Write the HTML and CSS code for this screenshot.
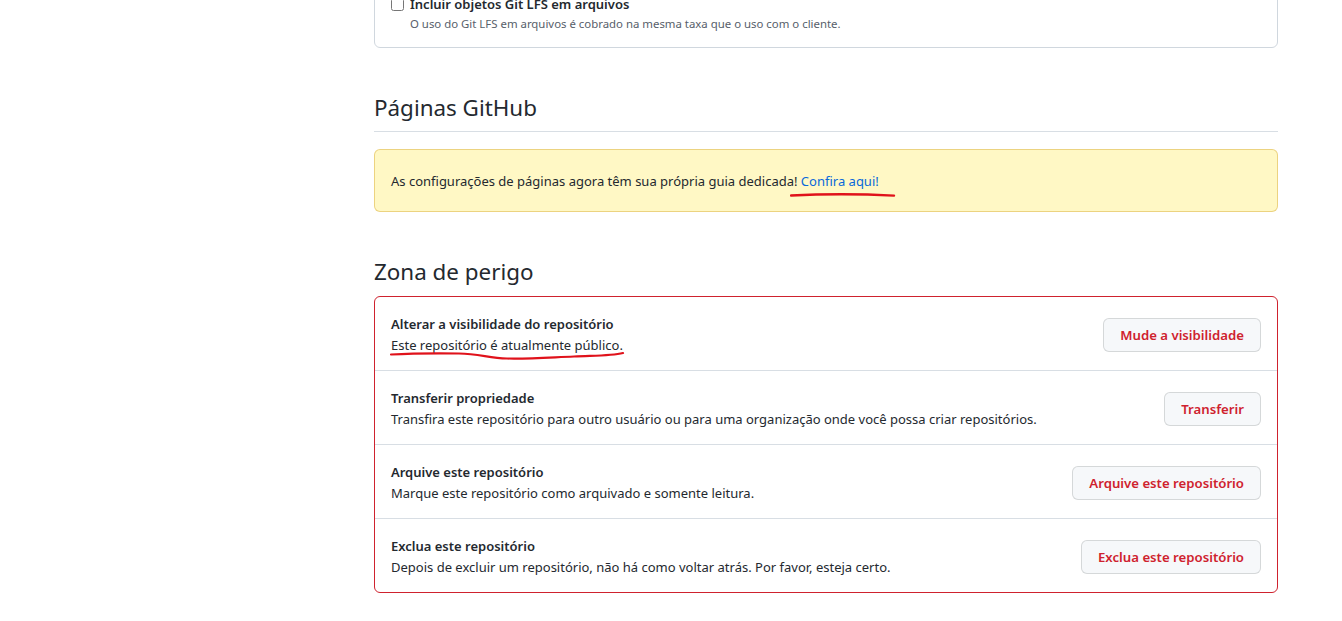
FILE: index.html
```html
<!DOCTYPE html>
<html lang="pt-BR">
<head>
<meta charset="utf-8">
<title>Configurações</title>
<link rel="stylesheet" href="styles.css">
</head>
<body>
<main class="content">
  <div class="box box-top">
    <label class="check-label"><input type="checkbox" class="check"> Incluir objetos Git LFS em arquivos</label>
    <p class="note">O uso do Git LFS em arquivos é cobrado na mesma taxa que o uso com o cliente.</p>
  </div>

  <h2 class="subhead subhead-line">Páginas GitHub</h2>
  <div class="flash">
    As configurações de páginas agora têm sua própria guia dedicada! <span class="annot-wrap"><a class="link" href="#">Confira aqui!</a><svg class="scribble scribble-link" width="106" height="8" viewBox="0 0 106 8"><path d="M1 4.5 C 30 3, 70 2.8, 104 4.6" stroke="#e0121b" stroke-width="2.4" fill="none" stroke-linecap="round"/></svg></span>
  </div>

  <h2 class="subhead subhead-danger">Zona de perigo</h2>
  <div class="danger">
    <div class="row">
      <div class="row-text">
        <strong class="row-title">Alterar a visibilidade do repositório</strong>
        <p class="row-desc"><span class="annot-wrap">Este repositório é atualmente público.<svg class="scribble scribble-desc" width="240" height="14" viewBox="0 0 240 14"><path d="M2 5.5 C 20 4.5, 45 4.2, 70 4.5 C 90 4.8, 100 9, 118 9.5 C 140 10, 160 8.5, 185 7.5 C 205 6.5, 222 7, 234 4" stroke="#e0121b" stroke-width="2.2" fill="none" stroke-linecap="round"/></svg></span></p>
      </div>
      <button class="btn">Mude a visibilidade</button>
    </div>
    <div class="row">
      <div class="row-text">
        <strong class="row-title">Transferir propriedade</strong>
        <p class="row-desc">Transfira este repositório para outro usuário ou para uma organização onde você possa criar repositórios.</p>
      </div>
      <button class="btn">Transferir</button>
    </div>
    <div class="row">
      <div class="row-text">
        <strong class="row-title">Arquive este repositório</strong>
        <p class="row-desc">Marque este repositório como arquivado e somente leitura.</p>
      </div>
      <button class="btn">Arquive este repositório</button>
    </div>
    <div class="row">
      <div class="row-text">
        <strong class="row-title">Exclua este repositório</strong>
        <p class="row-desc">Depois de excluir um repositório, não há como voltar atrás. Por favor, esteja certo.</p>
      </div>
      <button class="btn">Exclua este repositório</button>
    </div>
  </div>
</main>
</body>
</html>
```

FILE: styles.css
```css
* { box-sizing: border-box; }

html, body {
  margin: 0;
  padding: 0;
  background: #ffffff;
  overflow: hidden;
}

body {
  font-family: "Noto Sans", "Open Sans", "Liberation Sans", sans-serif;
  font-size: 13px;
  line-height: 21px;
  color: #24292f;
}

.content {
  width: 904px;
  margin-left: 374px;
}

.box {
  border: 1px solid #d0d7de;
  border-radius: 6px;
}

.box-top {
  margin-top: -23px;
  padding: 16px 16px 14px 16px;
}

.check-label {
  display: flex;
  align-items: center;
  gap: 6px;
  font-weight: 600;
  line-height: 21px;
}

.check {
  margin: 0;
  width: 13px;
  height: 13px;
}

.note {
  margin: 0;
  padding-left: 19px;
  font-size: 11.4px;
  line-height: 18px;
  color: #57606a;
}

.subhead {
  margin: 0;
  font-size: 22.4px;
  line-height: 30px;
  font-weight: 400;
  color: #24292f;
}

.subhead-line {
  margin-top: 45px;
  padding-bottom: 8px;
  border-bottom: 1px solid #d8dee4;
}

.flash {
  margin-top: 17px;
  padding: 21px 16px 19px 16px;
  background: #fff8c5;
  border: 1px solid rgba(212, 167, 44, 0.45);
  border-radius: 6px;
  line-height: 21px;
}

.link {
  color: #0969da;
  text-decoration: none;
}

.annot-wrap {
  position: relative;
  display: inline-block;
}

.scribble {
  position: absolute;
  pointer-events: none;
}

.scribble-link {
  left: -11px;
  top: 20px;
}

.scribble-desc {
  left: -2px;
  top: 14px;
}

.subhead-danger {
  margin-top: 45px;
  padding-bottom: 9px;
}

.danger {
  border: 1px solid #cf222e;
  border-radius: 6px;
}

.row {
  display: flex;
  align-items: center;
  justify-content: space-between;
  padding: 17px 16px 14px 16px;
  border-top: 1px solid #d8dee4;
}

.row:first-child {
  border-top: none;
}

.row-text {
  display: flex;
  flex-direction: column;
}

.row-title {
  font-weight: 600;
  line-height: 21px;
}

.row-desc {
  margin: 0;
  line-height: 21px;
}

.btn {
  font-family: inherit;
  font-size: 13.2px;
  font-weight: 600;
  line-height: 20px;
  padding: 6px 16px;
  color: #cf222e;
  background: #f6f8fa;
  border: 1px solid rgba(27, 31, 36, 0.15);
  border-radius: 6px;
  white-space: nowrap;
  cursor: pointer;
}
```
